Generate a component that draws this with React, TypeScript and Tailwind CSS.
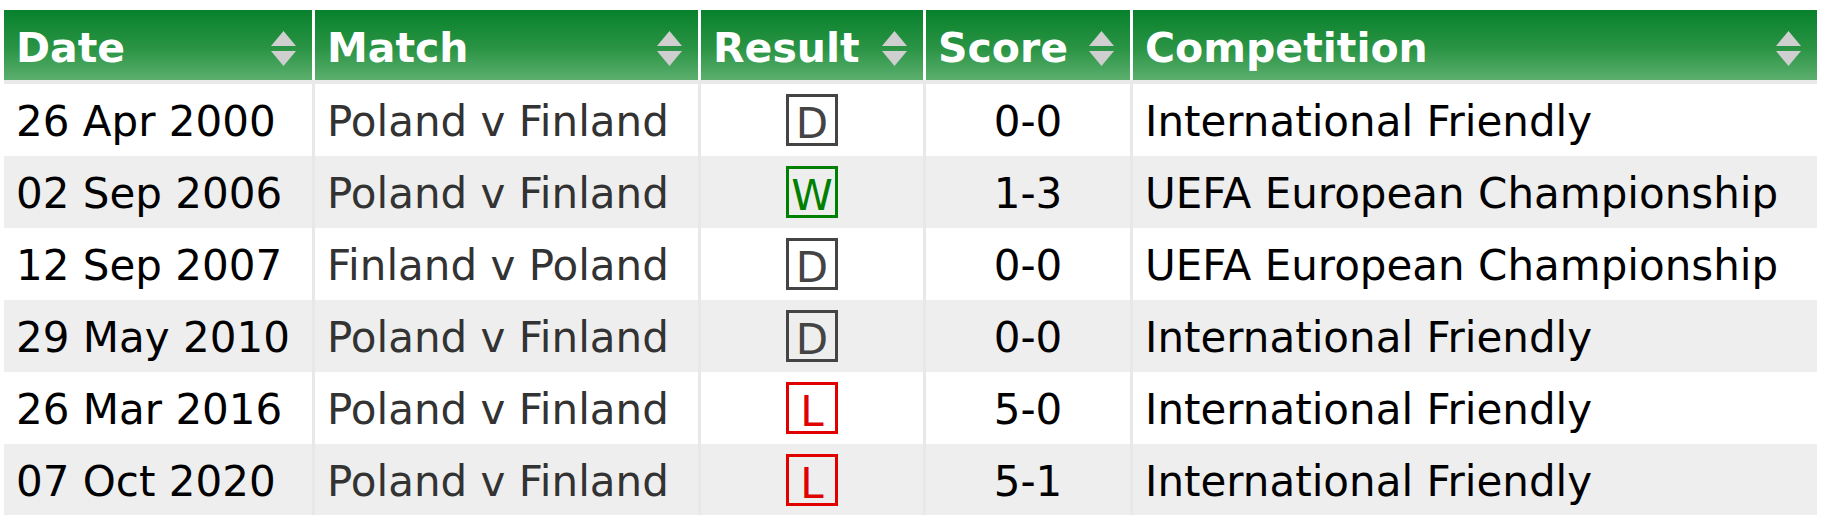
import React from "react";

type Result = "W" | "D" | "L";

const matches: { date: string; match: string; result: Result; score: string; competition: string }[] = [
  { date: "26 Apr 2000", match: "Poland v Finland", result: "D", score: "0-0", competition: "International Friendly" },
  { date: "02 Sep 2006", match: "Poland v Finland", result: "W", score: "1-3", competition: "UEFA European Championship" },
  { date: "12 Sep 2007", match: "Finland v Poland", result: "D", score: "0-0", competition: "UEFA European Championship" },
  { date: "29 May 2010", match: "Poland v Finland", result: "D", score: "0-0", competition: "International Friendly" },
  { date: "26 Mar 2016", match: "Poland v Finland", result: "L", score: "5-0", competition: "International Friendly" },
  { date: "07 Oct 2020", match: "Poland v Finland", result: "L", score: "5-1", competition: "International Friendly" },
];

const cols = "grid grid-cols-[308px_386px_225px_207px_687px]";

function SortIcon() {
  return (
    <svg width="25" height="35" viewBox="0 0 25 35" className="shrink-0">
      <polygon points="12.5,0 25,15 0,15" fill="#cfcfcf" />
      <polygon points="0,20 25,20 12.5,35" fill="#cfcfcf" />
    </svg>
  );
}

function HeaderCell({ label, first }: { label: string; first?: boolean }) {
  return (
    <div
      className={`flex items-center justify-between pl-3 pr-4 pt-[8px] bg-[linear-gradient(to_bottom,#08812c,#2a9444_55%,#5caf6e)] ${
        first ? "" : "border-l-[3px] border-white"
      }`}
    >
      <span className="text-[41px] font-bold text-white leading-normal whitespace-nowrap">{label}</span>
      <SortIcon />
    </div>
  );
}

function ResultBadge({ result }: { result: Result }) {
  const styles: Record<Result, string> = {
    W: "border-[#008000] text-[#008000]",
    D: "border-[#444444] text-[#444444]",
    L: "border-[#e00000] text-[#e00000]",
  };
  return (
    <span
      className={`block w-[52px] h-[52px] border-[3px] pt-[7px] text-center leading-[39px] ${styles[result]}`}
    >
      {result}
    </span>
  );
}

export default function App() {
  return (
    <div
      className="w-[1823px] min-h-[515px] bg-white pt-[10px] pl-[4px]"
      style={{ fontFamily: '"DejaVu Sans", Verdana, sans-serif' }}
    >
      <div className="w-[1813px]">
        {/* Header */}
        <div className={`${cols} h-[68px]`}>
          <HeaderCell label="Date" first />
          <HeaderCell label="Match" />
          <HeaderCell label="Result" />
          <HeaderCell label="Score" />
          <HeaderCell label="Competition" />
        </div>
        <div className="h-[6px] bg-[#e9e9e9]" />

        {/* Rows */}
        {matches.map((m, i) => (
          <div
            key={m.date}
            className={`${cols} h-[72px] text-[42px] ${i % 2 === 1 ? "bg-[#eeeeee]" : "bg-white"}`}
          >
            <div className="flex items-center pl-3 pt-[2px] text-black whitespace-nowrap">{m.date}</div>
            <div className="flex items-center pl-3 pt-[2px] text-[#333333] border-l-[3px] border-[#e8e8e8] whitespace-nowrap">
              {m.match}
            </div>
            <div className="flex items-center justify-center border-l-[3px] border-[#e8e8e8]">
              <ResultBadge result={m.result} />
            </div>
            <div className="flex items-center justify-center pt-[2px] text-black border-l-[3px] border-[#e8e8e8]">
              {m.score}
            </div>
            <div className="flex items-center pl-3 pt-[2px] text-black border-l-[3px] border-[#e8e8e8] whitespace-nowrap">
              {m.competition}
            </div>
          </div>
        ))}
      </div>
    </div>
  );
}
